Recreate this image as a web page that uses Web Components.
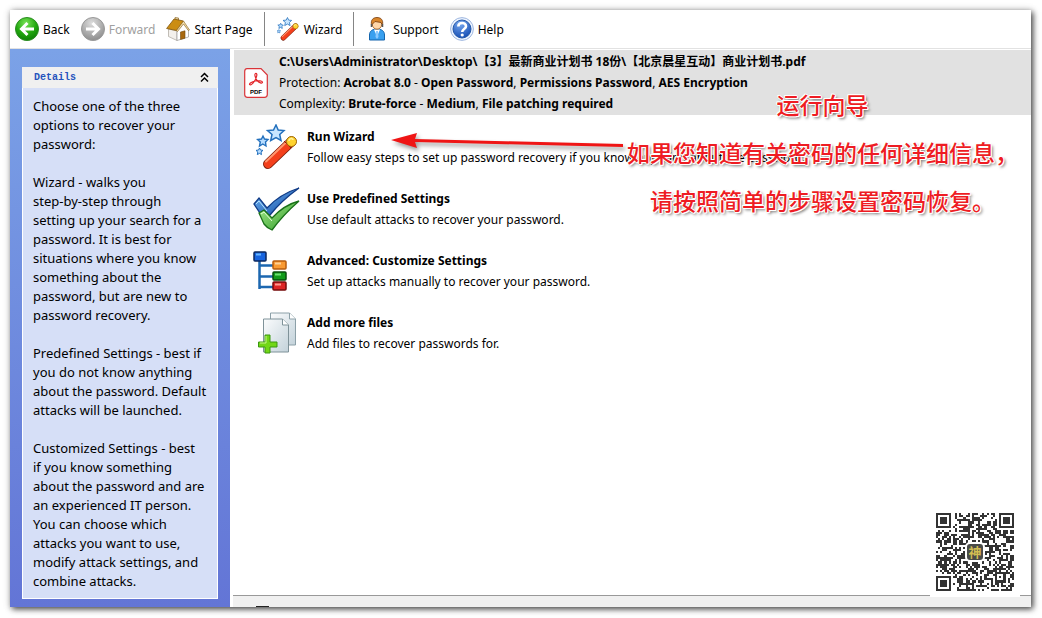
<!DOCTYPE html>
<html lang="en">
<head>
<meta charset="utf-8">
<meta name="viewport" content="width=device-width, initial-scale=1">
<title>Password Recovery</title>
<style>
  body {
    margin: 0;
    background: #fff;
    color: #000;
    font: 13px/21px "Noto Sans", "Noto Sans CJK SC", sans-serif;
  }
</style>
</head>
<body>
<recovery-app></recovery-app>

<script>
const ICONS = {
  back: ["0 0 24 24", `
    <defs><radialGradient id="g" cx=".45" cy=".25" r=".8"><stop offset="0" stop-color="#7be35a"/><stop offset=".55" stop-color="#22a80f"/><stop offset="1" stop-color="#0b7a05"/></radialGradient></defs>
    <circle cx="12" cy="12" r="11.5" fill="url(#g)" stroke="#2b8d22"/>
    <path d="M19 12H7M12.5 6 6.5 12l6 6" fill="none" stroke="#fff" stroke-width="3"/>`],
  forward: ["0 0 24 24", `
    <defs><radialGradient id="g" cx=".45" cy=".25" r=".8"><stop offset="0" stop-color="#ddd"/><stop offset=".6" stop-color="#aaa"/><stop offset="1" stop-color="#888"/></radialGradient></defs>
    <circle cx="12" cy="12" r="11.5" fill="url(#g)" stroke="#999"/>
    <path d="M5 12h12M11.5 6l6 6-6 6" fill="none" stroke="#fff" stroke-width="3"/>`],
  home: ["0 0 24 24", `
    <path d="M2.500 12v7.500L11 23.500V14z" fill="#f3f0ec" stroke="#a9a39b" stroke-width=".7"/>
    <path d="M11 14 17.500 6l5 7v7L11 23.500z" fill="#fff" stroke="#999" stroke-width=".7"/>
    <path d="m14.500 15 4.500-1.200v7.400l-4.500 1.300z" fill="#a8680f" stroke="#74490b" stroke-width=".6"/>
    <path d="M9 3V.600l3.500.400v3" fill="#e9d9b4" stroke="#8a611b" stroke-width=".7"/>
    <path d="M.600 11.500 8 2l9.500 2-7 9.500z" fill="#cb8d12" stroke="#80550c" stroke-width=".8"/>
    <path d="M10.500 13.500 17.500 4l6 9-1.200.500-4.800-6.500-6 7.500z" fill="#f1ddaa" stroke="#8a611b" stroke-width=".6"/>`],
  wand: ["0 0 42 46", `
    <path d="m20 1 2.200 5 5.800.500-4.300 4 1.300 6-5-3-5.300 3 1.300-6-4.500-4 6-.500z" fill="#c8e6ff" stroke="#2370bd" stroke-width="1.500"/>
    <path d="m7 12 1.500 3 3.500.500-2.500 2.500.500 4-3.200-2-3.300 2 .800-4L1.500 15.500 5.500 15z" fill="#b8ddff" stroke="#2370bd" stroke-width="1.400"/>
    <path d="m3.500 24 1 2 2.500.400-2 1.600.500 2.600-2-1.200-2.200 1.200.500-2.600L0 26.400l2.600-.400z" fill="#b8ddff" stroke="#2370bd"/>
    <path d="M12 40 35.500 17.500" stroke="#7c200d" stroke-width="10" stroke-linecap="round"/>
    <path d="M12 40 35 18" stroke="#f3401c" stroke-width="8" stroke-linecap="round"/>
    <path d="M10 37.500 31 17.500" stroke="#ff9770" stroke-width="2" stroke-linecap="round"/>
    <path d="m28 17 7 7" stroke="#8c1a08"/>
    <circle cx="35.500" cy="17.500" r="5" fill="#ffd32f" stroke="#a06a08"/>
    <path d="M33 17c0-3 4-3 4-1" fill="none" stroke="#fff2a0" stroke-width="1.500"/>`],
  person: ["0 0 18 24", `
    <path d="M1.500 23v-5c0-4 3-6 7.500-6s7.500 2 7.500 6v5z" fill="#39a0ef" stroke="#1465ad"/>
    <path d="m6 12.500 3 7 3-7z" fill="#fff"/><path d="m8 14-.500 6L9 22l1.500-2L10 14z" fill="#8ccaff"/>
    <circle cx="9" cy="7.500" r="4.700" fill="#ffd6a8" stroke="#ad6d32"/>
    <path d="M3.500 8C2.500 3 5 .500 9 .500S15.500 3 14.500 8L13 5.500 7 4.500z" fill="#d9862b" stroke="#74390c" stroke-width=".8"/>
    <path d="M3.500 7v3M14.500 7v3" stroke="#555" stroke-width="1.500"/>`],
  help: ["0 0 24 24", `
    <defs><radialGradient id="g" cx=".4" cy=".2" r=".8"><stop offset="0" stop-color="#79a9ef"/><stop offset="1" stop-color="#164fb5"/></radialGradient></defs>
    <circle cx="12" cy="12" r="11.400" fill="#edf4ff" stroke="#9fb7df"/>
    <circle cx="12" cy="12" r="9" fill="url(#g)" stroke="#2458a8"/>
    <path d="M8.300 9.500C8.300 4.800 16 5 16 9.300c0 2.800-3.800 2.700-3.800 5.700" fill="none" stroke="#fff" stroke-width="2.600"/><circle cx="12.200" cy="18" r="1.600" fill="#fff"/>`],
  pdf: ["0 0 24 30", `
    <path d="M3 .700h14L23.300 7v19.500q0 2.800-2.800 2.800H3.500Q.700 29.300.700 26.500V3.500Q.700.700 3 .700z" fill="#fff" stroke="#d93438" stroke-width="1.200"/>
    <path d="M11.500 5.500c2.600-.500 1 4.500-1 7.500-1.600 2.600-3.800 4.600-4.800 3.600-.900-1 2-2.900 5.500-3.600 3.500-.600 7.300-.100 7.300 1.300 0 1.600-3.500.700-5.500-2-1.600-2-2.900-6.300-1.500-6.800z" fill="none" stroke="#e3252a" stroke-width="1.200"/>
    <text x="12" y="26" text-anchor="middle" font-family="Liberation Sans, sans-serif" font-size="6" font-weight="700">PDF</text>`],
  checks: ["0 0 48 44", `
    <defs><linearGradient id="b" x2="1" y2="1"><stop offset="0" stop-color="#75bdf8"/><stop offset="1" stop-color="#0b3f9b"/></linearGradient><linearGradient id="g" x2="1" y2="1"><stop offset="0" stop-color="#aaf090"/><stop offset="1" stop-color="#289421"/></linearGradient></defs>
    <path d="m1 17 5-6 8 10Q27 7 46 1 28 14 17 28l-8 1z" fill="url(#b)" stroke="#103b86" stroke-width="1.300"/>
    <path d="m3 17 3-3 8 10" fill="none" stroke="#b5e2ff"/>
    <path d="m6 26 5-3 8 8Q31 18 46 14 30 28 19 43 14 41 11 37z" fill="url(#g)" stroke="#197118" stroke-width="1.300"/>
    <path d="m8 27 3-2 8 9" fill="none" stroke="#e1ffd5"/>`],
  tree: ["0 0 34 40", `
    <path d="M6.500 8v30M6 14.500h15M6 25.500h15M6 36h15" stroke="#1c67b0" stroke-width="2.500"/>
    <rect x="1" y="1" width="12" height="9" rx="1" fill="#1764df" stroke="#0b275e" stroke-width="1.500"/><path d="M3 3.500h5" stroke="#69b7ff" stroke-width="2"/>
    <rect x="20" y="10" width="13" height="8" rx="1" fill="#f99a32" stroke="#b65c0e" stroke-width="1.500"/><path d="M22 12.500h6" stroke="#ffd195" stroke-width="2"/>
    <rect x="20" y="21" width="13" height="8" rx="1" fill="#119b19" stroke="#074d0b" stroke-width="1.500"/><path d="M22 23.500h6" stroke="#6ee073" stroke-width="2"/>
    <rect x="20" y="31" width="13" height="8" rx="1" fill="#dd2525" stroke="#750b0b" stroke-width="1.500"/><path d="M22 33.500h6" stroke="#ff9b90" stroke-width="2"/>`],
  files: ["0 0 38 42", `
    <defs><linearGradient id="g" x2="1" y2="1"><stop offset="0" stop-color="#fbfcfd"/><stop offset="1" stop-color="#c3d2da"/></linearGradient></defs>
    <path d="M12.500 1h19l6 6v26h-25z" fill="url(#g)" stroke="#8ca0a8"/><path d="M31.500 1v6h6" fill="#fff" stroke="#8ca0a8"/>
    <path d="M5.500 7h19l6 6v27h-25z" fill="url(#g)" stroke="#7f9299"/><path d="M24.500 7v6h6" fill="#fff" stroke="#7f9299"/>
    <path d="M7 23h5v7h7v5h-7v6H7v-6H.500v-5H7z" fill="#72d716" stroke="#3a9710"/><path d="M8 24v7H2" fill="none" stroke="#c6f58a"/>`]
};

class AppIcon extends HTMLElement {
  constructor() {
    super();
    this.attachShadow({ mode: "open" });
  }

  connectedCallback() {
    const [viewBox, shapes] = ICONS[this.getAttribute("name")];
    this.shadowRoot.innerHTML = /* html */`
    <style>
      :host { display: block; flex: none; width: var(--icon-width, 24px); height: var(--icon-height, 24px); }
      svg { display: block; width: 100%; height: 100%; }
    </style>
    <svg viewBox="${viewBox}" aria-hidden="true">${shapes}</svg>`;
  }
}

class ToolButton extends HTMLElement {
  constructor() {
    super();
    this.attachShadow({ mode: "open" });
  }

  connectedCallback() {
    this.shadowRoot.innerHTML = /* html */`
    <style>
      :host { display: block; flex: none; }
      button {
        display: flex;
        align-items: center;
        gap: 4px;
        padding: 0;
        border: 0;
        background: none;
        color: #000;
        font: inherit;
        white-space: nowrap;
      }
      button:disabled { color: #a0a0a0; }
    </style>
    <button type="button" ${this.hasAttribute("disabled") ? "disabled" : ""}>
      <app-icon name="${this.getAttribute("icon")}"></app-icon><slot></slot>
    </button>`;
  }
}

class ToolBar extends HTMLElement {
  constructor() {
    super();
    this.attachShadow({ mode: "open" });
  }

  connectedCallback() {
    this.shadowRoot.innerHTML = /* html */`
    <style>
      :host { display: block; background: #fff; border-bottom: 1px solid #e2e2e2; font-size: 12px; }
      nav { display: flex; align-items: center; height: 38px; padding-left: 5px; gap: 11px; }
      i { width: 1px; height: 34px; background: #858585; }
    </style>
    <nav aria-label="Toolbar">
      <tool-button icon="back">Back</tool-button>
      <tool-button icon="forward" disabled>Forward</tool-button>
      <tool-button icon="home">Start Page</tool-button>
      <i></i>
      <tool-button icon="wand">Wizard</tool-button>
      <i></i>
      <tool-button icon="person">Support</tool-button>
      <tool-button icon="help">Help</tool-button>
    </nav>`;
  }
}

class DetailsPanel extends HTMLElement {
  constructor() {
    super();
    this.attachShadow({ mode: "open" });
  }

  connectedCallback() {
    this.shadowRoot.innerHTML = /* html */`
    <style>
      :host {
        display: block;
        box-sizing: border-box;
        width: 220px;
        flex: none;
        padding: 18px 12px 8px;
        background: linear-gradient(#7ba2e7, #6375d6);
      }
      header {
        display: flex;
        align-items: center;
        justify-content: space-between;
        height: 21px;
        padding: 0 8px 0 12px;
        background: #f0f0f0;
      }
      h2 { margin: 0; color: #2553bd; font: bold 10px/20px "Liberation Mono", monospace; }
      button { display: flex; padding: 0; border: 0; background: none; }
      section {
        padding: 9px 4px 7px 10px;
        border: 1px solid #fff;
        border-top: 0;
        background: #d6dff7;
        line-height: 19px;
      }
      p { margin: 0 0 19px; white-space: pre-line; }
      p:last-child { margin: 0; }
    </style>
    <header>
      <h2>Details</h2>
      <button type="button" aria-label="Collapse">
        <svg width="11" height="11" viewBox="0 0 11 11" fill="none" stroke="#000" stroke-width="1.500"><path d="m2 5 3.500-3.500L9 5M2 9.500 5.500 6 9 9.500"/></svg>
      </button>
    </header>
    <section>
      <p>Choose one of the three
      options to recover your
      password:</p>
      <p>Wizard - walks you
      step-by-step through
      setting up your search for a
      password. It is best for
      situations where you know
      something about the
      password, but are new to
      password recovery.</p>
      <p>Predefined Settings - best if
      you do not know anything
      about the password. Default
      attacks will be launched.</p>
      <p>Customized Settings - best
      if you know something
      about the password and are
      an experienced IT person.
      You can choose which
      attacks you want to use,
      modify attack settings, and
      combine attacks.</p>
    </section>`;
  }
}

class FileSummary extends HTMLElement {
  constructor() {
    super();
    this.attachShadow({ mode: "open" });
  }

  connectedCallback() {
    this.shadowRoot.innerHTML = /* html */`
    <style>
      :host { display: flex; align-items: center; gap: 11px; padding: 1px 10px; background: #e1e1e1; }
      app-icon { --icon-height: 30px; }
      p { margin: 0; white-space: nowrap; font-size: 12px; }
    </style>
    <app-icon name="pdf"></app-icon>
    <div>
      <p><b>C:\\Users\\Administrator\\Desktop\\【3】最新商业计划书 18份\\【北京晨星互动】商业计划书.pdf</b></p>
      <p>Protection: <b>Acrobat 8.0</b> - <b>Open Password</b>, <b>Permissions Password</b>, <b>AES Encryption</b></p>
      <p>Complexity: <b>Brute-force</b> - <b>Medium</b>, <b>File patching required</b></p>
    </div>`;
  }
}

class RecoveryOption extends HTMLElement {
  constructor() {
    super();
    this.attachShadow({ mode: "open" });
  }

  connectedCallback() {
    this.shadowRoot.innerHTML = /* html */`
    <style>
      :host { display: block; }
      button {
        display: flex;
        align-items: center;
        gap: 6px;
        padding: 0;
        border: 0;
        background: none;
        color: inherit;
        font: inherit;
        font-size: 12px;
        text-align: left;
        white-space: nowrap;
      }
      .icon { display: flex; justify-content: center; width: 48px; }
      :host([icon="tree"]) .icon { justify-content: start; }
      .text { display: flex; flex-direction: column; }
      app-icon { --icon-width: 42px; --icon-height: 46px; }
      app-icon[name="checks"] { --icon-width: 48px; --icon-height: 44px; }
      app-icon[name="tree"] { --icon-width: 34px; --icon-height: 40px; }
      app-icon[name="files"] { --icon-width: 38px; --icon-height: 42px; }
    </style>
    <button type="button">
      <span class="icon"><app-icon name="${this.getAttribute("icon")}"></app-icon></span>
      <span class="text"><b><slot name="title"></slot></b><span><slot></slot></span></span>
    </button>`;
  }
}

class QrCode extends HTMLElement {
  constructor() {
    super();
    this.attachShadow({ mode: "open" });
  }

  // 37 modules per side: finders in three corners, an alignment square near the fourth
  get modules() {
    const size = 37;
    const finders = [[0, 0], [size - 7, 0], [0, size - 7]];
    let seed = 90127;
    let path = "";
    for (let y = 0; y < size; y++) {
      for (let x = 0; x < size; x++) {
        seed = (seed * 1103515245 + 12345) % 2147483648;
        let dark = seed / 2147483648 > 0.43;
        for (const [fx, fy] of finders) {
          const ring = Math.max(Math.abs(x - fx - 3), Math.abs(y - fy - 3));
          if (ring <= 4) dark = ring === 3 || ring <= 1;
        }
        const align = Math.max(Math.abs(x - 30), Math.abs(y - 30));
        if (align <= 2) dark = align !== 1;
        if (dark) path += `M${x} ${y}h1v1h-1z`;
      }
    }
    return path;
  }

  connectedCallback() {
    this.shadowRoot.innerHTML = /* html */`
    <style>
      :host { display: grid; place-items: center; width: 78px; height: 78px; padding: 6px; background: #fff; }
      svg, span { grid-area: 1 / 1; }
      svg { width: 78px; height: 78px; }
      span {
        width: 16px;
        border: 2px solid #fff;
        border-radius: 5px;
        background: #494b48;
        color: #d2bd52;
        font-size: 13px;
        font-weight: 700;
        line-height: 16px;
        text-align: center;
      }
    </style>
    <svg viewBox="0 0 37 37" role="img" aria-label="QR code" shape-rendering="crispEdges"><path fill="#333" d="${this.modules}"/></svg>
    <span>神</span>`;
  }
}

class WizardNote extends HTMLElement {
  constructor() {
    super();
    this.attachShadow({ mode: "open" });
  }

  connectedCallback() {
    this.shadowRoot.innerHTML = /* html */`
    <style>
      :host {
        display: flex;
        pointer-events: none;
        color: #ee1c23;
        font: 500 23px/48px "Noto Sans CJK SC", sans-serif;
        text-align: center;
        white-space: nowrap;
      }
      svg { flex: none; width: 236px; height: 22px; margin-top: 50px; filter: drop-shadow(2px 3px 2px #0006); }
      p {
        margin: 0;
        text-shadow: 1px 0 #fff, -1px 0 #fff, 0 1px #fff, 0 -1px #fff, 1px 1px #fff, -1px -1px #fff, 2px 2px 3px #0009;
      }
    </style>
    <svg viewBox="0 0 236 22" aria-hidden="true"><path d="M0 10 26 3l-2 6 208 5v3L24 12l2 6z" fill="#ef1515"/></svg>
    <div lang="zh-CN">
      <p>运行向导</p>
      <p>如果您知道有关密码的任何详细信息，</p>
      <p>请按照简单的步骤设置密码恢复。</p>
    </div>`;
  }
}

class RecoveryApp extends HTMLElement {
  constructor() {
    super();
    this.attachShadow({ mode: "open" });
  }

  connectedCallback() {
    this.shadowRoot.innerHTML = /* html */`
    <style>
      :host {
        display: flex;
        flex-direction: column;
        min-height: calc(100vh - 21px);
        margin: 10px 11px 11px 10px;
        background: #fff;
        box-shadow: 2px 2px 6px #000b, 0 0 8px #0002;
      }
      .body { display: flex; flex: 1; }
      main { position: relative; display: flex; flex: 1; flex-direction: column; min-width: 0; }
      file-summary { margin: 1px 0 0 4px; }
      .options { display: grid; gap: 16px; padding: 9px 0 0 23px; grid-auto-rows: 46px; align-items: center; }
      footer { display: flex; align-items: end; height: 11px; margin: auto 0 0 3px; border-top: 1px solid #999; background: #f0f0f0; }
      footer i { width: 13px; height: 1px; margin-left: 23px; background: #222; }
      wizard-note { position: absolute; top: 31px; left: 161px; }
      qr-code { position: absolute; right: 11px; bottom: 10px; }
    </style>
    <tool-bar></tool-bar>
    <div class="body">
      <details-panel></details-panel>
      <main>
        <file-summary></file-summary>
        <div class="options">
          <recovery-option icon="wand"><span slot="title">Run Wizard</span>Follow easy steps to set up password recovery if you know anything about the password.</recovery-option>
          <recovery-option icon="checks"><span slot="title">Use Predefined Settings</span>Use default attacks to recover your password.</recovery-option>
          <recovery-option icon="tree"><span slot="title">Advanced: Customize Settings</span>Set up attacks manually to recover your password.</recovery-option>
          <recovery-option icon="files"><span slot="title">Add more files</span>Add files to recover passwords for.</recovery-option>
        </div>
        <footer><i></i></footer>
        <wizard-note></wizard-note>
        <qr-code></qr-code>
      </main>
    </div>`;
  }
}

customElements.define("app-icon", AppIcon);
customElements.define("tool-button", ToolButton);
customElements.define("tool-bar", ToolBar);
customElements.define("details-panel", DetailsPanel);
customElements.define("file-summary", FileSummary);
customElements.define("recovery-option", RecoveryOption);
customElements.define("qr-code", QrCode);
customElements.define("wizard-note", WizardNote);
customElements.define("recovery-app", RecoveryApp);
</script>
</body>
</html>
